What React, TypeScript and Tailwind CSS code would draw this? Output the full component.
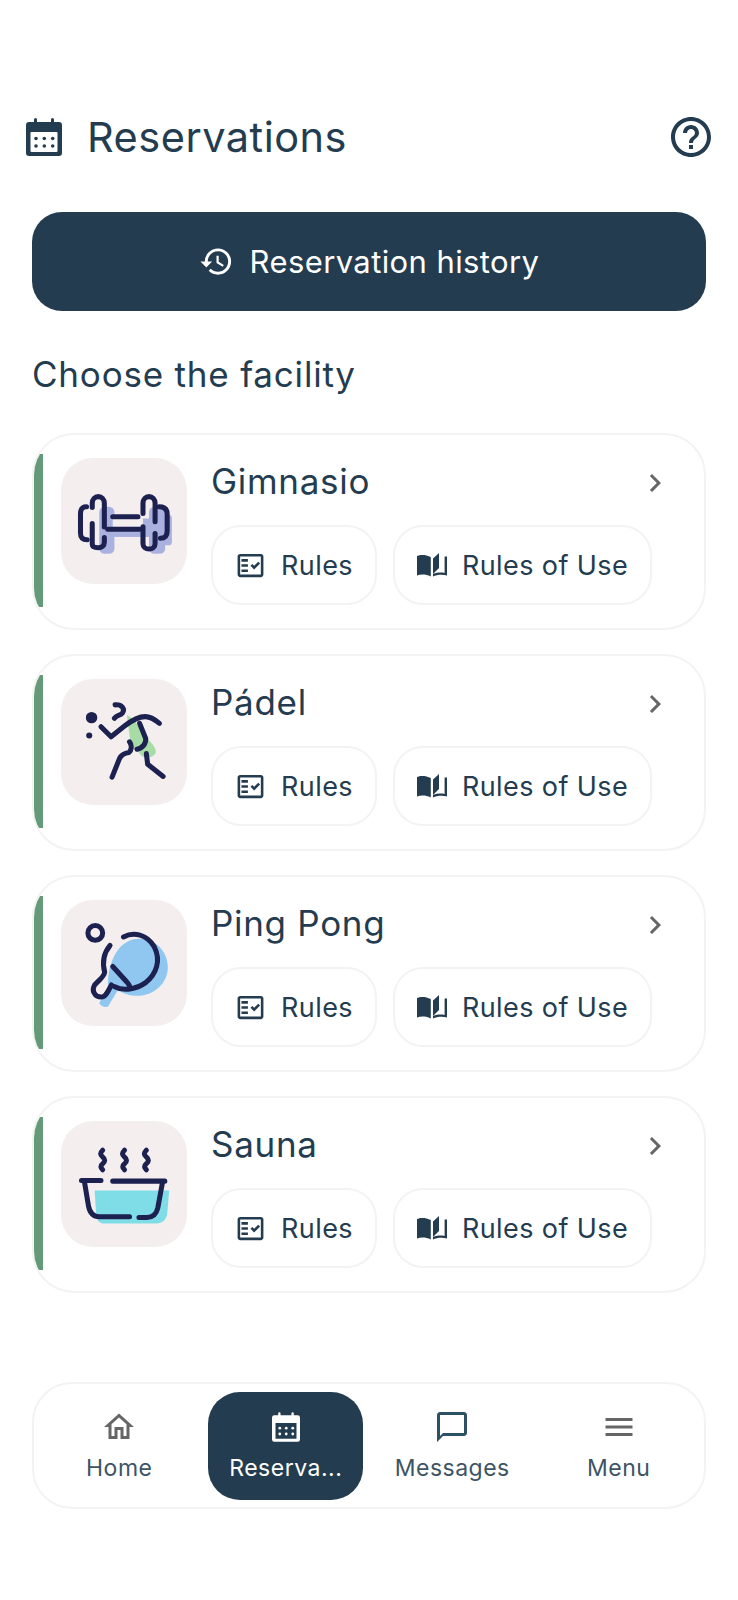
import React from "react";
import { MdHistory, MdOutlineHelpOutline, MdOutlineFactCheck, MdChevronRight, MdOutlineHome, MdChatBubbleOutline, MdMenu } from "react-icons/md";

const CAL = "M3 4h5V1.5a1.5 1.5 0 0 1 3 0V4h14V1.5a1.5 1.5 0 0 1 3 0V4h5a3 3 0 0 1 3 3v28a3 3 0 0 1-3 3H3a3 3 0 0 1-3-3V7a3 3 0 0 1 3-3z";
const DOTS = [10, 18.3, 26.7].flatMap((x) => [20.5, 28].map((y) => [x, y]));

function CalendarIcon({ className }: { className: string }) {
  return (
    <svg viewBox="0 0 36 38" className={className}>
      <path d={CAL} fill="#243c4f" />
      <rect x="4.5" y="14" width="27" height="20" rx="1" fill="#ffffff" />
      <g fill="#243c4f">
        {DOTS.map(([x, y]) => <circle key={x + "-" + y} cx={x} cy={y} r="1.8" />)}
      </g>
    </svg>
  );
}

function BookIcon() {
  return (
    <svg viewBox="0 0 30 24" className="h-[24px] w-[30px]" fill="#243c4f">
      <path d="M0 3c3-1.6 9-1.6 13.8 1v19.5C9 21 4 21 0 22.4z" />
      <path d="M16 5.5 22 0v15l-6 6z" />
      <path d="M16 23.5c4-2 9.5-2.4 14-1V3.5h-2.4v16.4c-3.6-.6-8-.3-11.600 1.200z" />
    </svg>
  );
}

const S = { fill: "none", stroke: "#1c2150", strokeWidth: 15, strokeLinecap: "round", strokeLinejoin: "round" } as const;

function Gym() {
  return (
    <svg viewBox="36 25 375 375" className="h-full w-full">
      <g fill="#a9b2de">
        <rect x="150" y="170" width="45" height="140" rx="16" />
        <rect x="298" y="170" width="48" height="140" rx="16" />
        <rect x="190" y="205" width="110" height="55" />
        <rect x="340" y="195" width="26" height="90" rx="10" />
      </g>
      <rect x="190" y="205" width="90" height="25" fill="#f4efee" />
      <g {...S}>
        <path d="M112 170c-14 0-18 8-18 22v56c0 14 6 20 20 20" />
        <path d="M165 230V160c0-12-8-20-18-20s-18 8-18 20v12M129 220v62c0 8 8 10 18 10s18-6 18-16v-14" />
        <path d="M190 200h75M175 237h95" />
        <path d="M280 230v50c0 10 8 16 18 16s18-6 18-16v-30M316 215v-55c0-12-8-20-18-20s-18 8-18 20v30" />
        <path d="M328 170c14 0 24 6 24 22v50c0 14-6 22-20 22" />
      </g>
    </svg>
  );
}

function Padel() {
  return (
    <svg viewBox="36 28 375 375" className="h-full w-full">
      <path d="M232 135c22 10 35 30 50 62 20 15 38 35 36 50-4 14-26 18-40 12-12-16-30-30-36-48z" fill="#a8dca6" />
      <circle cx="127" cy="143" r="17" fill="#1c2150" />
      <circle cx="120" cy="196" r="9" fill="#1c2150" />
      <g {...S}>
        <path d="M197 105c20-2 30 12 22 24-6 8-16 5-24 16" />
        <path d="M155 170l30 30 40-32c18-14 40-28 62-28 14 0 30 10 42 20" />
        <path d="M270 160l18 45c2 14-8 28-26 32" />
        <path d="M240 215c8 10 6 26-2 32-14 2-22 6-28 18l-22 55" />
        <path d="M290 250l4 32 46 36" />
      </g>
    </svg>
  );
}

function Pong() {
  return (
    <svg viewBox="36 30 375 375" className="h-full w-full">
      <path d="M270 145c50 0 84 40 84 85 0 50-44 85-90 85-22 0-44-6-58-18l-30 50c-10 4-22-2-26-10l26-52c-2-50 20-140 94-140z" fill="#8fc7f1" />
      <g {...S}>
        <circle cx="138" cy="128" r="22" />
        <path d="M222 140c30-16 70-8 92 30 20 40 6 80-26 106-28 20-66 26-92 12" />
        <path d="M190 228l42 46c4 4 6 8 8 12" />
        <path d="M182 165c-18 22-24 50-16 80-2 14-16 22-30 38-10 16 0 36 20 36 14 0 20-18 30-36" />
      </g>
    </svg>
  );
}

function Sauna() {
  return (
    <svg viewBox="36 33 375 375" className="h-full w-full">
      <path d="M136 240h222l-6 70c-4 18-14 28-32 28H165c-14 0-22-8-24-24z" fill="#7fdde8" />
      <g {...S}>
        {[160, 225, 290].map((x) => (
          <path key={x} d={`M${x} 120c-8 8-8 14 0 20s8 14 0 20s-6 12 0 18`} />
        ))}
        <path d="M97 210h58M190 212h155" />
        <path d="M106 215l12 72c4 20 14 32 34 31h88" />
        <path d="M268 320h24c18 0 28-10 32-28l14-76" />
      </g>
    </svg>
  );
}

const items = [
  { name: "Gimnasio", art: <Gym /> },
  { name: "Pádel", art: <Padel /> },
  { name: "Ping Pong", art: <Pong /> },
  { name: "Sauna", art: <Sauna /> },
];

function Chip({ icon, label, width }: { icon: React.ReactNode; label: string; width: string }) {
  return (
    <div className={`flex h-[80px] items-center justify-center gap-[15px] rounded-[30px] border-2 border-[#f3f3f3] bg-white ${width}`}>
      {icon}
      <span className="text-[27px] leading-none tracking-[0.4px]">{label}</span>
    </div>
  );
}

function FacilityCard({ name, art }: { name: string; art: React.ReactNode }) {
  return (
    <div className="relative flex h-[197px] overflow-hidden rounded-[42px] border-2 border-[#f3f3f3] bg-white pl-[27px] pt-[23px]">
      <div className="absolute bottom-[21px] left-0 top-[19px] w-[9px] bg-[#659a78]" />
      <div className="h-[126px] w-[126px] shrink-0 rounded-[32px] bg-[#f4efee]">{art}</div>
      <div className="ml-[24px] flex-1">
        <div className="flex h-[46px] items-center">
          <span className="text-[35px] leading-none tracking-[0.7px]">{name}</span>
          <MdChevronRight className="ml-auto mr-[31px] mt-[4px] text-[36px] text-[#666666]" />
        </div>
        <div className="mt-[21px] flex gap-[16px]">
          <Chip width="w-[166px]" icon={<MdOutlineFactCheck className="text-[31px]" />} label="Rules" />
          <Chip width="w-[259px]" icon={<BookIcon />} label="Rules of Use" />
        </div>
      </div>
    </div>
  );
}

function NavItem({ icon, label, active }: { icon: React.ReactNode; label: string; active?: boolean }) {
  return (
    <div className="flex flex-1 justify-center">
      <div className={`flex h-[108px] w-[155px] flex-col items-center justify-center rounded-[32px] ${active ? "bg-[#243c4f] text-white" : "text-[#3d5465]"}`}>
        <div className="flex h-[36px] items-center justify-center">{icon}</div>
        <span className="mt-[8px] whitespace-nowrap text-[23px] leading-[30px] tracking-[0.5px]">{label}</span>
      </div>
    </div>
  );
}

export default function App() {
  return (
    <div className="h-[1600px] w-full bg-white text-[#243c4f] [font-family:Inter,sans-serif]">
      <div className="flex items-center justify-between pl-[26px] pr-[23px] pt-[112px]">
        <div className="flex items-center gap-[25px]">
          <CalendarIcon className="h-[40px] w-[36px]" />
          <h1 className="text-[41.5px] font-normal leading-[50px] tracking-[0.5px]">Reservations</h1>
        </div>
        <MdOutlineHelpOutline className="text-[48px]" />
      </div>

      <div className="px-[32px]">
        <div className="mt-[50px] flex h-[99px] items-center justify-center gap-[16px] rounded-[30px] bg-[#243c4f] text-white">
          <MdHistory className="text-[35px]" />
          <span className="text-[31px] leading-none tracking-[0.4px]">Reservation history</span>
        </div>

        <h2 className="mt-[41px] text-[35px] font-normal leading-[44px] tracking-[0.8px]">Choose the facility</h2>

        <div className="mt-[37px] flex flex-col gap-[24px]">
          {items.map((it) => (
            <FacilityCard key={it.name} name={it.name} art={it.art} />
          ))}
        </div>

        <div className="mt-[89px] flex h-[127px] items-center rounded-[40px] border-2 border-[#f3f3f3] bg-white px-[2px]">
          <NavItem icon={<MdOutlineHome className="text-[36px] text-[#666666]" />} label="Home" />
          <NavItem active icon={<svg viewBox="0 0 36 38" className="h-[30px] w-[28px]" fill="#fff"><path fillRule="evenodd" d={CAL + "M4.5 14v20h27V14z"} /><g>{DOTS.map(([x, y]) => <circle key={x + "-" + y} cx={x} cy={y} r="1.8" />)}</g></svg>} label="Reserva..." />
          <NavItem icon={<MdChatBubbleOutline className="text-[36px] text-[#2f5064]" />} label="Messages" />
          <NavItem icon={<MdMenu className="text-[36px] text-[#666666]" />} label="Menu" />
        </div>
      </div>
    </div>
  );
}
